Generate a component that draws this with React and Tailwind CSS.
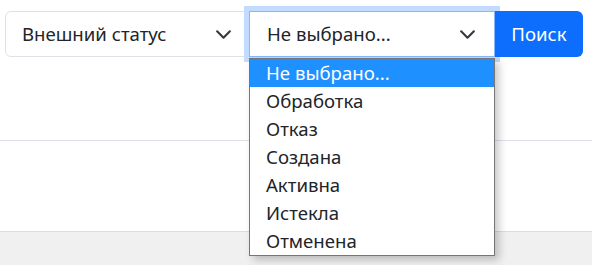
import React from "react";

const options = ["Не выбрано...", "Обработка", "Отказ", "Создана", "Активна", "Истекла", "Отменена"];

function Chevron() {
  return (
    <svg width="17" height="17" viewBox="0 0 16 16" fill="none" className="shrink-0">
      <path d="m2 5 6 6 6-6" stroke="#343a40" strokeWidth="2" strokeLinecap="round" strokeLinejoin="round" />
    </svg>
  );
}

export default function App() {
  return (
    <div className="w-[592px] h-[265px] bg-white text-[#212529] overflow-hidden font-['Noto_Sans',sans-serif]">
      {/* FILTER ROW */}
      <div className="h-[141px] border-b border-[#dee2e6] pt-[11px] pl-[5px]">
        <div className="flex h-[46px] w-[578px]">
          <div className="relative z-0 flex items-center justify-between w-[244px] h-full border border-[#dee2e6] rounded-l-[6px] bg-white pl-[16px] pr-[16px] text-[18.6px]">
            <span>Внешний статус</span>
            <Chevron />
          </div>

          <div className="relative z-10 w-[246px] h-full">
            <div className="flex items-center justify-between h-full border border-[#86b7fe] bg-white pl-[17px] pr-[18px] text-[18.6px] shadow-[0_0_0_5px_#c2dbfe]">
              <span>Не выбрано...</span>
              <Chevron />
            </div>

            {/* OPEN LIST */}
            <div className="absolute left-0 top-full mt-px w-full border border-[#767676] bg-white shadow-[4px_4px_8px_rgba(0,0,0,0.22)]">
              {options.map((o, i) => (
                <div
                  key={o}
                  className={`h-[28px] flex items-center pl-[16px] text-[18.6px] ${
                    i === 0 ? "bg-[#1e90ff] text-white" : "text-[#212529]"
                  }`}
                >
                  {o}
                </div>
              ))}
            </div>
          </div>

          <button className="relative z-20 w-[88px] h-full bg-[#0d6efd] text-white text-[18.6px] rounded-r-[6px]">
            Поиск
          </button>
        </div>
      </div>

      <div className="h-[90px] bg-white" />
      <div className="h-[34px] border-t border-[#dcdcdc] bg-[#f0f0f0]" />
    </div>
  );
}
